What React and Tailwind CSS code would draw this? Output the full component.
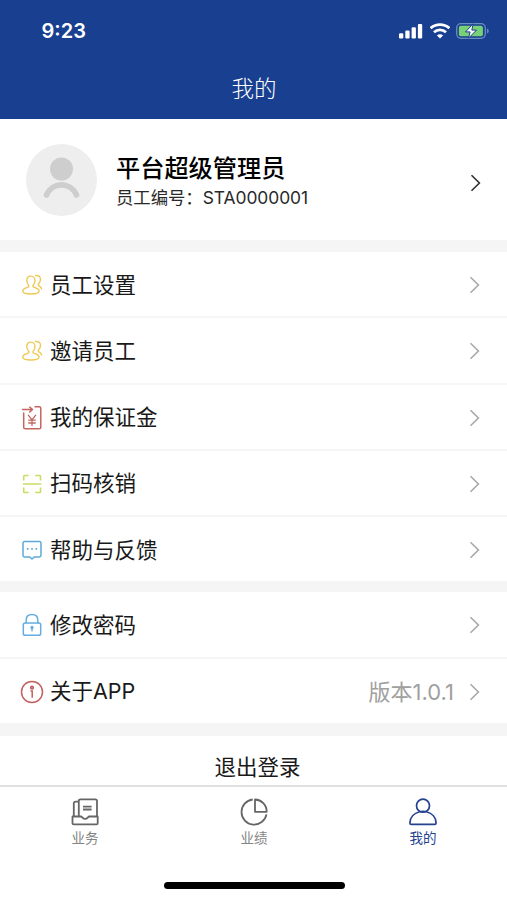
import React, { useState } from 'react';

const StaffIcon = () => (
  <svg width="22" height="22" viewBox="0 0 22 22" fill="none" stroke="#efc956" strokeWidth="1.4" strokeLinecap="round" strokeLinejoin="round">
    <path d="M9.900 2.100c-2.500 0-4.100 1.900-4.100 4.500 0 2 .7 3.500 1.800 4.600.6.700.3 1.600-.5 1.900-2.400 1-5.400 1.500-5.400 4 0 2.300 3.400 2.900 8.200 2.900s8.200-.6 8.200-2.900c0-2.500-3-3-5.400-4-.8-.3-1.100-1.200-.5-1.900 1.100-1.100 1.800-2.600 1.800-4.600 0-2.600-1.600-4.500-4.100-4.500z" />
    <path d="M14.600 1.500c3-.4 4.900 1.300 4.900 4 0 1.800-.9 3.200-1.900 4.200-.7.700-.5 1.400.2 1.900 1.300.8 2.500 1.600 2.800 3.300" />
  </svg>
);

const DepositIcon = () => (
  <svg width="22" height="26" viewBox="0 0 22 26" fill="none" stroke="#c4665f" strokeWidth="1.5" strokeLinecap="round" strokeLinejoin="round">
    <path d="M2.700 8v14.200c0 1 .6 1.600 1.600 1.600h13.900c1 0 1.600-.6 1.600-1.600V3.300c0-1-.6-1.600-1.600-1.600h-4.200" />
    <path d="M1.500 4.500h10M8.700 2.200l2.900 2.300-2.900 2.400" />
    <path d="M7.300 10.200l3.700 4.700 3.700-4.700M11 14.900v5.500M7.700 15.200h6.600M7.700 18h6.600" strokeWidth="1.300" />
  </svg>
);

const ScanIcon = () => (
  <svg width="22" height="22" viewBox="0 0 22 22" fill="none" stroke="#cbdc66" strokeWidth="1.600">
    <path d="M2.700 7.500V3.300c0-.5.300-.8.800-.8h4.200M14.200 2.500h4.500c.500 0 .8.300.8.800v4.200M19.500 14.500v4.200c0 .5-.3.800-.8.800h-4.500M7.700 19.500H3.500c-.5 0-.8-.3-.8-.8v-4.200M1.900 11h18.400" />
  </svg>
);

const FeedbackIcon = () => (
  <svg width="22" height="22" viewBox="0 0 22 22" fill="none" stroke="#5caad8" strokeWidth="1.500" strokeLinejoin="round">
    <path d="M3.700 2.500h14.600c1 0 1.700.7 1.700 1.700v12c0 1-.7 1.700-1.700 1.700h-4.900L11 20l-2.400-2.100H3.700c-1 0-1.700-.7-1.700-1.700v-12c0-1 .7-1.700 1.700-1.700z" />
    <path d="M5.900 9.800h1.600M10.200 9.800h1.600M14.500 9.800h1.600" strokeWidth="1.700" />
  </svg>
);

const LockIcon = () => (
  <svg width="22" height="24" viewBox="0 0 22 24" fill="none" stroke="#64afe0" strokeWidth="1.500" strokeLinecap="round">
    <rect x="2.300" y="10" width="17.400" height="12.300" rx="1.800" />
    <path d="M5.200 10V7.200c0-3.400 2.300-5.600 5.800-5.600s5.800 2.200 5.800 5.600V10M11 15v2.800" />
    <circle cx="11" cy="14.500" r="0.900" fill="#64afe0" />
  </svg>
);

const AboutIcon = () => (
  <svg width="24" height="24" viewBox="0 0 24 24" fill="none" stroke="#c4605f" strokeWidth="1.500">
    <circle cx="12" cy="12" r="10.500" />
    <circle cx="12" cy="7.700" r="1.400" fill="#d98f8d" />
    <path d="M10.500 11h1.700v6.800" />
  </svg>
);

const Chevron = ({ color = '#a8a8a8' }) => (
  <svg width="12" height="20" viewBox="0 0 12 20" fill="none" stroke={color} strokeWidth="1.600">
    <path d="M1.500 2.200L9.400 10l-7.900 7.800" />
  </svg>
);

const WorkIcon = () => (
  <svg width="28" height="28" viewBox="0 0 28 28" fill="none" stroke="currentColor" strokeWidth="1.800" strokeLinejoin="round">
    <path d="M7.800 18.300V2.800c0-1 .7-1.500 1.500-1.500h15c1 0 1.700.6 1.700 1.600v15.400M7.800 3.700H4.600c-1 0-1.800.8-1.800 1.800v12.800" />
    <path d="M1.500 18.500h8.300c1.600 0 1.900 2.400 4.300 2.400s2.700-2.400 4.300-2.400h8.300v6.700c0 .7-.5 1.200-1.200 1.200H2.700c-.7 0-1.200-.5-1.200-1.200z" />
    <path d="M12 8.600h8.600M12 11.500h8.600" />
  </svg>
);

const ChartIcon = () => (
  <svg width="28" height="28" viewBox="0 0 28 28" fill="none" stroke="currentColor" strokeWidth="1.800" strokeLinejoin="round">
    <path d="M12.700 1.500A12.600 12.600 0 1 0 26.500 16.400" />
    <path d="M15 1.500v12.300h11.700C26.700 7 21.500 1.800 15 1.500z" />
  </svg>
);

const MineIcon = () => (
  <svg width="28" height="28" viewBox="0 0 28 28" fill="none" stroke="currentColor" strokeWidth="1.700" strokeLinejoin="round">
    <circle cx="14" cy="7.700" r="6.500" />
    <path d="M10.600 13.800C5 15.200 1 19.400.9 25c0 .9.500 1.400 1.400 1.400h23.400c.9 0 1.400-.5 1.400-1.400-.1-5.600-4.100-9.800-9.700-11.200-2.200-.6-4.600-.6-6.800 0z" />
  </svg>
);

const staffMenu = [
  { label: '员工设置', Icon: StaffIcon },
  { label: '邀请员工', Icon: StaffIcon },
  { label: '我的保证金', Icon: DepositIcon },
  { label: '扫码核销', Icon: ScanIcon },
  { label: '帮助与反馈', Icon: FeedbackIcon },
];

const accountMenu = [
  { label: '修改密码', Icon: LockIcon },
  { label: '关于APP', Icon: AboutIcon, extra: '版本1.0.1' },
];

const tabs = [
  { label: '业务', Icon: WorkIcon },
  { label: '业绩', Icon: ChartIcon },
  { label: '我的', Icon: MineIcon },
];

const StatusBar = () => (
  <div className="flex h-[60px] items-center justify-between pl-[41.500px] pr-[17.500px] pt-[2px]">
    <span className="font-['Inter'] text-[20px] font-semibold leading-none">9:23</span>
    <div className="flex items-center gap-[6px]">
      <svg width="25" height="16" viewBox="0 0 25 16" fill="currentColor">
        <rect x="0" y="10.200" width="4.300" height="5.300" rx="1.200" />
        <rect x="6.300" y="7.500" width="4.300" height="8" rx="1.200" />
        <rect x="12.600" y="4.200" width="4.300" height="11.300" rx="1.200" />
        <rect x="18.900" y="0.900" width="4.300" height="14.600" rx="1.200" />
      </svg>
      <svg width="20" height="16" viewBox="0 0 20 16" fill="none" stroke="currentColor" strokeWidth="2.800">
        <path d="M0.600 5.200c5.400-4.800 13.400-4.800 18.800 0" />
        <path d="M4 9.300c3.400-3.200 8.600-3.200 12 0" />
        <path d="M10 15.500l-3.100-3.100c1.800-1.500 4.400-1.500 6.200 0z" fill="currentColor" stroke="none" />
      </svg>
      <svg width="34" height="16" viewBox="0 0 34 16" fill="none">
        <rect x="0.700" y="0.700" width="28.600" height="14.600" rx="4.200" stroke="#6d8bbd" strokeWidth="1.300" />
        <path d="M31 5.500c2.300.8 2.300 4.200 0 5z" fill="#6d8bbd" />
        <rect x="2.900" y="2.800" width="24" height="10.400" rx="2" fill="#76d275" />
        <path d="M17.200 0.800L9.500 8.900h4.600L12.500 15.200l8-8.100H15.800z" fill="#fff" stroke="#193f90" strokeWidth="1" strokeLinejoin="round" />
      </svg>
    </div>
  </div>
);

const MenuRow = ({ label, Icon, extra }) => (
  <button className="flex h-[66.250px] w-full items-center border-b-2 border-[#f6f6f6] pl-[20px] pr-[26px] pt-[2px] last:h-[64.250px] last:border-b-0">
    <span className="flex w-6 shrink-0 justify-center">
      <Icon />
    </span>
    <span className="-mt-px ml-[6px] flex-1 text-left text-[21.500px] leading-[30px] text-[#191919]">{label}</span>
    {extra && <span className="mr-[15px] text-[22px] leading-[30px] text-[#a0a0a0]">{extra}</span>}
    <Chevron />
  </button>
);

const App = () => {
  const [activeTab, setActiveTab] = useState('我的');

  return (
    <div className="flex h-[900px] w-full flex-col overflow-hidden bg-[#f5f5f5] font-['Inter','Noto_Sans_CJK_SC',sans-serif]">
      {/* Header */}
      <header className="h-[119px] shrink-0 bg-[#193f90] text-white">
        <StatusBar />
        <h1 className="pt-[13px] pl-px text-center text-[22.500px] font-light leading-[32px]">我的</h1>
      </header>

      <main className="min-h-0 flex-1">
        {/* Profile */}
        <section className="flex h-[121px] items-center bg-white pl-[26px] pr-[25px]">
          <svg width="71" height="72" viewBox="0 0 71 72" fill="none">
            <ellipse cx="35.500" cy="36" rx="35.500" ry="36" fill="#eeeeee" />
            <circle cx="35.500" cy="25" r="11.500" fill="#cecece" />
            <path d="M20.500 51c6-13.500 24-13.500 30 0" stroke="#cecece" strokeWidth="5.600" strokeLinecap="round" />
          </svg>
          <div className="ml-[19px] flex-1 pt-[3px]">
            <p className="text-[24.200px] font-medium leading-[34px] text-black">平台超级管理员</p>
            <p className="-mt-px text-[17.400px] leading-[26px] tracking-[-0.050px] text-[#292929]">员工编号：STA0000001</p>
          </div>
          <span className="pt-[7px]">
            <Chevron color="#303030" />
          </span>
        </section>

        <section className="mt-3 bg-white">
          {staffMenu.map((item) => (
            <MenuRow key={item.label} {...item} />
          ))}
        </section>

        <section className="mt-[11px] bg-white">
          {accountMenu.map((item) => (
            <MenuRow key={item.label} {...item} />
          ))}
        </section>

        <button className="mt-[13px] block h-[60px] w-full bg-white pl-2 pt-[3px] text-center text-[21.500px] leading-[57px] text-[#191919]">
          退出登录
        </button>
      </main>

      {/* Tab bar */}
      <footer className="h-[115px] shrink-0 border-t-2 border-[#e1e1e1] bg-white">
        <nav className="grid grid-cols-3 pt-[11px]">
          {tabs.map(({ label, Icon }) => (
            <button
              key={label}
              onClick={() => setActiveTab(label)}
              className={`flex flex-col items-center pl-px ${activeTab === label ? 'text-[#25418f]' : 'text-[#666666]'}`}
            >
              <Icon />
              <span className={`mt-[2px] text-[13.500px] leading-[20px] ${activeTab === label ? '' : 'text-[#858585]'}`}>{label}</span>
            </button>
          ))}
        </nav>
        <div className="mx-auto mt-[34px] h-[7px] w-[181px] translate-x-px rounded-full bg-black" />
      </footer>
    </div>
  );
};

export default App;
